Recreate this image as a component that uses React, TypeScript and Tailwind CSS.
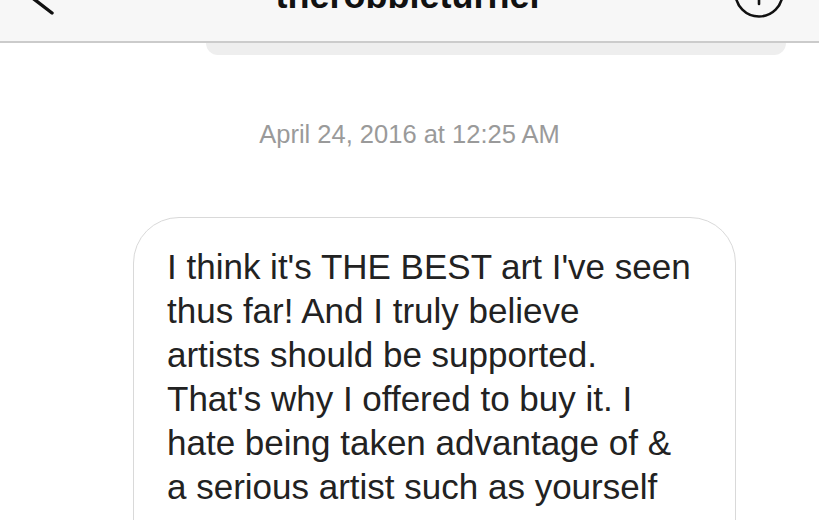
import React from "react";

const lines = [
  "I think it's THE BEST art I've seen",
  "thus far! And I truly believe",
  "artists should be supported.",
  "That's why I offered to buy it. I",
  "hate being taken advantage of &",
  "a serious artist such as yourself",
];

export default function App() {
  return (
    <div
      className="w-[819px] h-[520px] overflow-hidden bg-white text-[#262626]"
      style={{ fontFamily: '"Liberation Sans", Arial, sans-serif' }}
    >
      <div className="relative h-[43px] bg-[#f7f7f7] border-b-2 border-[#cbcbcb] overflow-hidden flex items-end justify-between">
        <svg width="70" height="41" viewBox="0 0 70 41" className="shrink-0">
          <path d="M13 -17 L52 13" stroke="#111" strokeWidth="3.4" strokeLinecap="round" fill="none" />
        </svg>
        <div className="absolute left-0 right-0 top-[-24px] text-center text-[36px] font-bold leading-[40px] text-[#111]">
          therobbieturner
        </div>
        <svg width="100" height="41" viewBox="0 0 100 41" className="shrink-0">
          <circle cx="40" cy="-7" r="23.5" stroke="#111" strokeWidth="2.6" fill="none" />
          <path d="M40 -3 L40 4" stroke="#111" strokeWidth="2.6" strokeLinecap="round" />
        </svg>
      </div>
      <div className="flex justify-center">
        <div className="ml-[172px] w-[580px] h-[12px] bg-[#eeeeee] rounded-b-[24px]" />
      </div>
      <div className="mt-[65px] text-center text-[25.5px] leading-[28px] text-[#9a9a9a]">
        April 24, 2016 at 12:25 AM
      </div>
      <div className="mt-[69px] ml-[133px] w-[603px] rounded-[46px] border-[1.5px] border-[#d9d9d9] pl-[33px] pt-[27px] pb-[80px]">
        {lines.map((l, i) => (
          <div key={i} className="text-[35px] leading-[44px] whitespace-nowrap text-[#222]">
            {l}
          </div>
        ))}
      </div>
    </div>
  );
}
